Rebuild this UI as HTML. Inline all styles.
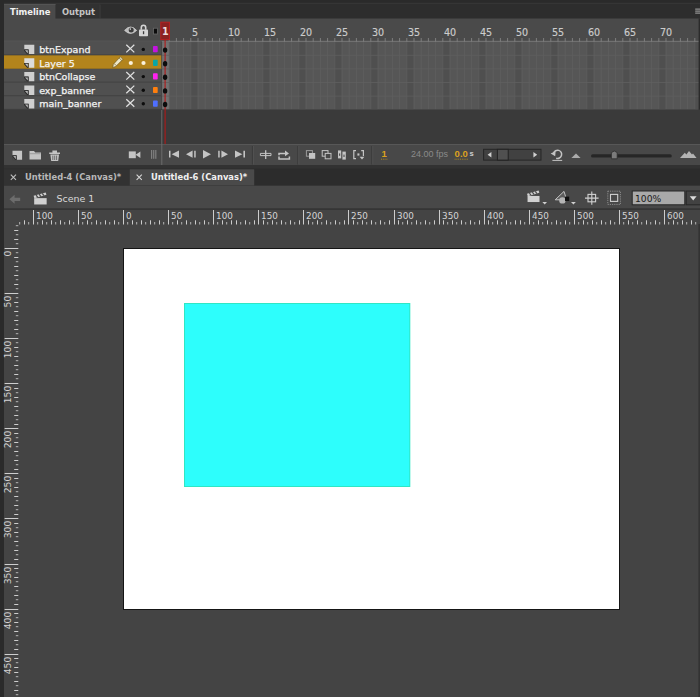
<!DOCTYPE html>
<html><head><meta charset="utf-8"><title>Animate</title>
<style>
html,body{margin:0;padding:0;background:#2a2a2a;}
body{width:700px;height:697px;position:relative;overflow:hidden;font-family:"DejaVu Sans","Liberation Sans",sans-serif;font-size:9.5px;color:#d6d6d6;}
.a{position:absolute;}
.t{position:absolute;white-space:nowrap;line-height:12px;height:12px;}
.b{font-family:"DejaVu Sans Condensed","DejaVu Sans","Liberation Sans",sans-serif;font-weight:bold;font-size:9.3px;}
svg{position:absolute;left:0;top:0;}
svg text{font-family:"DejaVu Sans","Liberation Sans",sans-serif;}
</style></head><body>

<svg width="700" height="697" viewBox="0 0 700 697">
<rect x="4" y="4" width="696" height="15" fill="#2d2d2d" />
<rect x="4" y="2.8" width="696" height="1" fill="#383838" />
<rect x="4" y="4" width="51.5" height="15" fill="#4a4a4a" />
<rect x="56" y="4" width="44" height="14.5" fill="#313131" />
<rect x="99.6" y="4.5" width="0.9" height="14" fill="#3e3e3e" />
<rect x="4" y="4" width="51.5" height="0.9" fill="#565656" />
<rect x="4" y="18.5" width="696" height="23" fill="#4a4a4a" />
<rect x="4" y="41.7" width="157.4" height="13.6" fill="#505050" />
<rect x="4" y="54.4" width="157.4" height="0.9" fill="#434343" />
<rect x="4" y="55.3" width="157.4" height="13.6" fill="#b3841c" />
<rect x="4" y="68.0" width="157.4" height="0.9" fill="#9a7420" />
<rect x="4" y="68.9" width="157.4" height="13.6" fill="#505050" />
<rect x="4" y="81.6" width="157.4" height="0.9" fill="#434343" />
<rect x="4" y="82.5" width="157.4" height="13.6" fill="#505050" />
<rect x="4" y="95.2" width="157.4" height="0.9" fill="#434343" />
<rect x="4" y="96.1" width="157.4" height="13.6" fill="#505050" />
<rect x="4" y="108.8" width="157.4" height="0.9" fill="#434343" />
<line x1="4" y1="41.2" x2="162" y2="41.2" stroke="#5e5e5e" stroke-width="0.9"/>
<rect x="162.0" y="41.5" width="536.6" height="68" fill="#565656" />
<rect x="190.8" y="41.5" width="7.2" height="68" fill="#4f4f4f" />
<rect x="226.8" y="41.5" width="7.2" height="68" fill="#4f4f4f" />
<rect x="262.8" y="41.5" width="7.2" height="68" fill="#4f4f4f" />
<rect x="298.8" y="41.5" width="7.2" height="68" fill="#4f4f4f" />
<rect x="334.8" y="41.5" width="7.2" height="68" fill="#4f4f4f" />
<rect x="370.8" y="41.5" width="7.2" height="68" fill="#4f4f4f" />
<rect x="406.8" y="41.5" width="7.2" height="68" fill="#4f4f4f" />
<rect x="442.8" y="41.5" width="7.2" height="68" fill="#4f4f4f" />
<rect x="478.8" y="41.5" width="7.2" height="68" fill="#4f4f4f" />
<rect x="514.8" y="41.5" width="7.2" height="68" fill="#4f4f4f" />
<rect x="550.8" y="41.5" width="7.2" height="68" fill="#4f4f4f" />
<rect x="586.8" y="41.5" width="7.2" height="68" fill="#4f4f4f" />
<rect x="622.8" y="41.5" width="7.2" height="68" fill="#4f4f4f" />
<rect x="658.8" y="41.5" width="7.2" height="68" fill="#4f4f4f" />
<rect x="694.8" y="41.5" width="7.2" height="68" fill="#4f4f4f" />
<rect x="162.0" y="41.5" width="7.2" height="68" fill="#727272" />
<line x1="162.0" y1="41.5" x2="162.0" y2="109.5" stroke="#626262" stroke-width="0.7"/>
<line x1="169.2" y1="41.5" x2="169.2" y2="109.5" stroke="#626262" stroke-width="0.7"/>
<line x1="176.4" y1="41.5" x2="176.4" y2="109.5" stroke="#626262" stroke-width="0.7"/>
<line x1="183.6" y1="41.5" x2="183.6" y2="109.5" stroke="#626262" stroke-width="0.7"/>
<line x1="190.8" y1="41.5" x2="190.8" y2="109.5" stroke="#626262" stroke-width="0.7"/>
<line x1="198.0" y1="41.5" x2="198.0" y2="109.5" stroke="#626262" stroke-width="0.7"/>
<line x1="205.2" y1="41.5" x2="205.2" y2="109.5" stroke="#626262" stroke-width="0.7"/>
<line x1="212.4" y1="41.5" x2="212.4" y2="109.5" stroke="#626262" stroke-width="0.7"/>
<line x1="219.6" y1="41.5" x2="219.6" y2="109.5" stroke="#626262" stroke-width="0.7"/>
<line x1="226.8" y1="41.5" x2="226.8" y2="109.5" stroke="#626262" stroke-width="0.7"/>
<line x1="234.0" y1="41.5" x2="234.0" y2="109.5" stroke="#626262" stroke-width="0.7"/>
<line x1="241.2" y1="41.5" x2="241.2" y2="109.5" stroke="#626262" stroke-width="0.7"/>
<line x1="248.4" y1="41.5" x2="248.4" y2="109.5" stroke="#626262" stroke-width="0.7"/>
<line x1="255.6" y1="41.5" x2="255.6" y2="109.5" stroke="#626262" stroke-width="0.7"/>
<line x1="262.8" y1="41.5" x2="262.8" y2="109.5" stroke="#626262" stroke-width="0.7"/>
<line x1="270.0" y1="41.5" x2="270.0" y2="109.5" stroke="#626262" stroke-width="0.7"/>
<line x1="277.2" y1="41.5" x2="277.2" y2="109.5" stroke="#626262" stroke-width="0.7"/>
<line x1="284.4" y1="41.5" x2="284.4" y2="109.5" stroke="#626262" stroke-width="0.7"/>
<line x1="291.6" y1="41.5" x2="291.6" y2="109.5" stroke="#626262" stroke-width="0.7"/>
<line x1="298.8" y1="41.5" x2="298.8" y2="109.5" stroke="#626262" stroke-width="0.7"/>
<line x1="306.0" y1="41.5" x2="306.0" y2="109.5" stroke="#626262" stroke-width="0.7"/>
<line x1="313.2" y1="41.5" x2="313.2" y2="109.5" stroke="#626262" stroke-width="0.7"/>
<line x1="320.4" y1="41.5" x2="320.4" y2="109.5" stroke="#626262" stroke-width="0.7"/>
<line x1="327.6" y1="41.5" x2="327.6" y2="109.5" stroke="#626262" stroke-width="0.7"/>
<line x1="334.8" y1="41.5" x2="334.8" y2="109.5" stroke="#626262" stroke-width="0.7"/>
<line x1="342.0" y1="41.5" x2="342.0" y2="109.5" stroke="#626262" stroke-width="0.7"/>
<line x1="349.2" y1="41.5" x2="349.2" y2="109.5" stroke="#626262" stroke-width="0.7"/>
<line x1="356.4" y1="41.5" x2="356.4" y2="109.5" stroke="#626262" stroke-width="0.7"/>
<line x1="363.6" y1="41.5" x2="363.6" y2="109.5" stroke="#626262" stroke-width="0.7"/>
<line x1="370.8" y1="41.5" x2="370.8" y2="109.5" stroke="#626262" stroke-width="0.7"/>
<line x1="378.0" y1="41.5" x2="378.0" y2="109.5" stroke="#626262" stroke-width="0.7"/>
<line x1="385.2" y1="41.5" x2="385.2" y2="109.5" stroke="#626262" stroke-width="0.7"/>
<line x1="392.4" y1="41.5" x2="392.4" y2="109.5" stroke="#626262" stroke-width="0.7"/>
<line x1="399.6" y1="41.5" x2="399.6" y2="109.5" stroke="#626262" stroke-width="0.7"/>
<line x1="406.8" y1="41.5" x2="406.8" y2="109.5" stroke="#626262" stroke-width="0.7"/>
<line x1="414.0" y1="41.5" x2="414.0" y2="109.5" stroke="#626262" stroke-width="0.7"/>
<line x1="421.2" y1="41.5" x2="421.2" y2="109.5" stroke="#626262" stroke-width="0.7"/>
<line x1="428.4" y1="41.5" x2="428.4" y2="109.5" stroke="#626262" stroke-width="0.7"/>
<line x1="435.6" y1="41.5" x2="435.6" y2="109.5" stroke="#626262" stroke-width="0.7"/>
<line x1="442.8" y1="41.5" x2="442.8" y2="109.5" stroke="#626262" stroke-width="0.7"/>
<line x1="450.0" y1="41.5" x2="450.0" y2="109.5" stroke="#626262" stroke-width="0.7"/>
<line x1="457.2" y1="41.5" x2="457.2" y2="109.5" stroke="#626262" stroke-width="0.7"/>
<line x1="464.4" y1="41.5" x2="464.4" y2="109.5" stroke="#626262" stroke-width="0.7"/>
<line x1="471.6" y1="41.5" x2="471.6" y2="109.5" stroke="#626262" stroke-width="0.7"/>
<line x1="478.8" y1="41.5" x2="478.8" y2="109.5" stroke="#626262" stroke-width="0.7"/>
<line x1="486.0" y1="41.5" x2="486.0" y2="109.5" stroke="#626262" stroke-width="0.7"/>
<line x1="493.2" y1="41.5" x2="493.2" y2="109.5" stroke="#626262" stroke-width="0.7"/>
<line x1="500.4" y1="41.5" x2="500.4" y2="109.5" stroke="#626262" stroke-width="0.7"/>
<line x1="507.6" y1="41.5" x2="507.6" y2="109.5" stroke="#626262" stroke-width="0.7"/>
<line x1="514.8" y1="41.5" x2="514.8" y2="109.5" stroke="#626262" stroke-width="0.7"/>
<line x1="522.0" y1="41.5" x2="522.0" y2="109.5" stroke="#626262" stroke-width="0.7"/>
<line x1="529.2" y1="41.5" x2="529.2" y2="109.5" stroke="#626262" stroke-width="0.7"/>
<line x1="536.4" y1="41.5" x2="536.4" y2="109.5" stroke="#626262" stroke-width="0.7"/>
<line x1="543.6" y1="41.5" x2="543.6" y2="109.5" stroke="#626262" stroke-width="0.7"/>
<line x1="550.8" y1="41.5" x2="550.8" y2="109.5" stroke="#626262" stroke-width="0.7"/>
<line x1="558.0" y1="41.5" x2="558.0" y2="109.5" stroke="#626262" stroke-width="0.7"/>
<line x1="565.2" y1="41.5" x2="565.2" y2="109.5" stroke="#626262" stroke-width="0.7"/>
<line x1="572.4" y1="41.5" x2="572.4" y2="109.5" stroke="#626262" stroke-width="0.7"/>
<line x1="579.6" y1="41.5" x2="579.6" y2="109.5" stroke="#626262" stroke-width="0.7"/>
<line x1="586.8" y1="41.5" x2="586.8" y2="109.5" stroke="#626262" stroke-width="0.7"/>
<line x1="594.0" y1="41.5" x2="594.0" y2="109.5" stroke="#626262" stroke-width="0.7"/>
<line x1="601.2" y1="41.5" x2="601.2" y2="109.5" stroke="#626262" stroke-width="0.7"/>
<line x1="608.4" y1="41.5" x2="608.4" y2="109.5" stroke="#626262" stroke-width="0.7"/>
<line x1="615.6" y1="41.5" x2="615.6" y2="109.5" stroke="#626262" stroke-width="0.7"/>
<line x1="622.8" y1="41.5" x2="622.8" y2="109.5" stroke="#626262" stroke-width="0.7"/>
<line x1="630.0" y1="41.5" x2="630.0" y2="109.5" stroke="#626262" stroke-width="0.7"/>
<line x1="637.2" y1="41.5" x2="637.2" y2="109.5" stroke="#626262" stroke-width="0.7"/>
<line x1="644.4" y1="41.5" x2="644.4" y2="109.5" stroke="#626262" stroke-width="0.7"/>
<line x1="651.6" y1="41.5" x2="651.6" y2="109.5" stroke="#626262" stroke-width="0.7"/>
<line x1="658.8" y1="41.5" x2="658.8" y2="109.5" stroke="#626262" stroke-width="0.7"/>
<line x1="666.0" y1="41.5" x2="666.0" y2="109.5" stroke="#626262" stroke-width="0.7"/>
<line x1="673.2" y1="41.5" x2="673.2" y2="109.5" stroke="#626262" stroke-width="0.7"/>
<line x1="680.4" y1="41.5" x2="680.4" y2="109.5" stroke="#626262" stroke-width="0.7"/>
<line x1="687.6" y1="41.5" x2="687.6" y2="109.5" stroke="#626262" stroke-width="0.7"/>
<line x1="694.8" y1="41.5" x2="694.8" y2="109.5" stroke="#626262" stroke-width="0.7"/>
<line x1="702.0" y1="41.5" x2="702.0" y2="109.5" stroke="#626262" stroke-width="0.7"/>
<line x1="162.0" y1="41.7" x2="700" y2="41.7" stroke="#606060" stroke-width="0.8"/>
<line x1="162.0" y1="55.3" x2="700" y2="55.3" stroke="#606060" stroke-width="0.8"/>
<line x1="162.0" y1="68.9" x2="700" y2="68.9" stroke="#606060" stroke-width="0.8"/>
<line x1="162.0" y1="82.5" x2="700" y2="82.5" stroke="#606060" stroke-width="0.8"/>
<line x1="162.0" y1="96.1" x2="700" y2="96.1" stroke="#606060" stroke-width="0.8"/>
<line x1="162.0" y1="109.7" x2="700" y2="109.7" stroke="#606060" stroke-width="0.8"/>
<line x1="162.0" y1="41.3" x2="700" y2="41.3" stroke="#808080" stroke-width="0.8"/>
<line x1="169.2" y1="38" x2="169.2" y2="41.5" stroke="#8a8a8a" stroke-width="0.8"/>
<line x1="176.4" y1="38" x2="176.4" y2="41.5" stroke="#8a8a8a" stroke-width="0.8"/>
<line x1="183.6" y1="38" x2="183.6" y2="41.5" stroke="#8a8a8a" stroke-width="0.8"/>
<line x1="190.8" y1="38" x2="190.8" y2="41.5" stroke="#8a8a8a" stroke-width="0.8"/>
<line x1="198.0" y1="38" x2="198.0" y2="41.5" stroke="#8a8a8a" stroke-width="0.8"/>
<line x1="205.2" y1="38" x2="205.2" y2="41.5" stroke="#8a8a8a" stroke-width="0.8"/>
<line x1="212.4" y1="38" x2="212.4" y2="41.5" stroke="#8a8a8a" stroke-width="0.8"/>
<line x1="219.6" y1="38" x2="219.6" y2="41.5" stroke="#8a8a8a" stroke-width="0.8"/>
<line x1="226.8" y1="38" x2="226.8" y2="41.5" stroke="#8a8a8a" stroke-width="0.8"/>
<line x1="234.0" y1="38" x2="234.0" y2="41.5" stroke="#8a8a8a" stroke-width="0.8"/>
<line x1="241.2" y1="38" x2="241.2" y2="41.5" stroke="#8a8a8a" stroke-width="0.8"/>
<line x1="248.4" y1="38" x2="248.4" y2="41.5" stroke="#8a8a8a" stroke-width="0.8"/>
<line x1="255.6" y1="38" x2="255.6" y2="41.5" stroke="#8a8a8a" stroke-width="0.8"/>
<line x1="262.8" y1="38" x2="262.8" y2="41.5" stroke="#8a8a8a" stroke-width="0.8"/>
<line x1="270.0" y1="38" x2="270.0" y2="41.5" stroke="#8a8a8a" stroke-width="0.8"/>
<line x1="277.2" y1="38" x2="277.2" y2="41.5" stroke="#8a8a8a" stroke-width="0.8"/>
<line x1="284.4" y1="38" x2="284.4" y2="41.5" stroke="#8a8a8a" stroke-width="0.8"/>
<line x1="291.6" y1="38" x2="291.6" y2="41.5" stroke="#8a8a8a" stroke-width="0.8"/>
<line x1="298.8" y1="38" x2="298.8" y2="41.5" stroke="#8a8a8a" stroke-width="0.8"/>
<line x1="306.0" y1="38" x2="306.0" y2="41.5" stroke="#8a8a8a" stroke-width="0.8"/>
<line x1="313.2" y1="38" x2="313.2" y2="41.5" stroke="#8a8a8a" stroke-width="0.8"/>
<line x1="320.4" y1="38" x2="320.4" y2="41.5" stroke="#8a8a8a" stroke-width="0.8"/>
<line x1="327.6" y1="38" x2="327.6" y2="41.5" stroke="#8a8a8a" stroke-width="0.8"/>
<line x1="334.8" y1="38" x2="334.8" y2="41.5" stroke="#8a8a8a" stroke-width="0.8"/>
<line x1="342.0" y1="38" x2="342.0" y2="41.5" stroke="#8a8a8a" stroke-width="0.8"/>
<line x1="349.2" y1="38" x2="349.2" y2="41.5" stroke="#8a8a8a" stroke-width="0.8"/>
<line x1="356.4" y1="38" x2="356.4" y2="41.5" stroke="#8a8a8a" stroke-width="0.8"/>
<line x1="363.6" y1="38" x2="363.6" y2="41.5" stroke="#8a8a8a" stroke-width="0.8"/>
<line x1="370.8" y1="38" x2="370.8" y2="41.5" stroke="#8a8a8a" stroke-width="0.8"/>
<line x1="378.0" y1="38" x2="378.0" y2="41.5" stroke="#8a8a8a" stroke-width="0.8"/>
<line x1="385.2" y1="38" x2="385.2" y2="41.5" stroke="#8a8a8a" stroke-width="0.8"/>
<line x1="392.4" y1="38" x2="392.4" y2="41.5" stroke="#8a8a8a" stroke-width="0.8"/>
<line x1="399.6" y1="38" x2="399.6" y2="41.5" stroke="#8a8a8a" stroke-width="0.8"/>
<line x1="406.8" y1="38" x2="406.8" y2="41.5" stroke="#8a8a8a" stroke-width="0.8"/>
<line x1="414.0" y1="38" x2="414.0" y2="41.5" stroke="#8a8a8a" stroke-width="0.8"/>
<line x1="421.2" y1="38" x2="421.2" y2="41.5" stroke="#8a8a8a" stroke-width="0.8"/>
<line x1="428.4" y1="38" x2="428.4" y2="41.5" stroke="#8a8a8a" stroke-width="0.8"/>
<line x1="435.6" y1="38" x2="435.6" y2="41.5" stroke="#8a8a8a" stroke-width="0.8"/>
<line x1="442.8" y1="38" x2="442.8" y2="41.5" stroke="#8a8a8a" stroke-width="0.8"/>
<line x1="450.0" y1="38" x2="450.0" y2="41.5" stroke="#8a8a8a" stroke-width="0.8"/>
<line x1="457.2" y1="38" x2="457.2" y2="41.5" stroke="#8a8a8a" stroke-width="0.8"/>
<line x1="464.4" y1="38" x2="464.4" y2="41.5" stroke="#8a8a8a" stroke-width="0.8"/>
<line x1="471.6" y1="38" x2="471.6" y2="41.5" stroke="#8a8a8a" stroke-width="0.8"/>
<line x1="478.8" y1="38" x2="478.8" y2="41.5" stroke="#8a8a8a" stroke-width="0.8"/>
<line x1="486.0" y1="38" x2="486.0" y2="41.5" stroke="#8a8a8a" stroke-width="0.8"/>
<line x1="493.2" y1="38" x2="493.2" y2="41.5" stroke="#8a8a8a" stroke-width="0.8"/>
<line x1="500.4" y1="38" x2="500.4" y2="41.5" stroke="#8a8a8a" stroke-width="0.8"/>
<line x1="507.6" y1="38" x2="507.6" y2="41.5" stroke="#8a8a8a" stroke-width="0.8"/>
<line x1="514.8" y1="38" x2="514.8" y2="41.5" stroke="#8a8a8a" stroke-width="0.8"/>
<line x1="522.0" y1="38" x2="522.0" y2="41.5" stroke="#8a8a8a" stroke-width="0.8"/>
<line x1="529.2" y1="38" x2="529.2" y2="41.5" stroke="#8a8a8a" stroke-width="0.8"/>
<line x1="536.4" y1="38" x2="536.4" y2="41.5" stroke="#8a8a8a" stroke-width="0.8"/>
<line x1="543.6" y1="38" x2="543.6" y2="41.5" stroke="#8a8a8a" stroke-width="0.8"/>
<line x1="550.8" y1="38" x2="550.8" y2="41.5" stroke="#8a8a8a" stroke-width="0.8"/>
<line x1="558.0" y1="38" x2="558.0" y2="41.5" stroke="#8a8a8a" stroke-width="0.8"/>
<line x1="565.2" y1="38" x2="565.2" y2="41.5" stroke="#8a8a8a" stroke-width="0.8"/>
<line x1="572.4" y1="38" x2="572.4" y2="41.5" stroke="#8a8a8a" stroke-width="0.8"/>
<line x1="579.6" y1="38" x2="579.6" y2="41.5" stroke="#8a8a8a" stroke-width="0.8"/>
<line x1="586.8" y1="38" x2="586.8" y2="41.5" stroke="#8a8a8a" stroke-width="0.8"/>
<line x1="594.0" y1="38" x2="594.0" y2="41.5" stroke="#8a8a8a" stroke-width="0.8"/>
<line x1="601.2" y1="38" x2="601.2" y2="41.5" stroke="#8a8a8a" stroke-width="0.8"/>
<line x1="608.4" y1="38" x2="608.4" y2="41.5" stroke="#8a8a8a" stroke-width="0.8"/>
<line x1="615.6" y1="38" x2="615.6" y2="41.5" stroke="#8a8a8a" stroke-width="0.8"/>
<line x1="622.8" y1="38" x2="622.8" y2="41.5" stroke="#8a8a8a" stroke-width="0.8"/>
<line x1="630.0" y1="38" x2="630.0" y2="41.5" stroke="#8a8a8a" stroke-width="0.8"/>
<line x1="637.2" y1="38" x2="637.2" y2="41.5" stroke="#8a8a8a" stroke-width="0.8"/>
<line x1="644.4" y1="38" x2="644.4" y2="41.5" stroke="#8a8a8a" stroke-width="0.8"/>
<line x1="651.6" y1="38" x2="651.6" y2="41.5" stroke="#8a8a8a" stroke-width="0.8"/>
<line x1="658.8" y1="38" x2="658.8" y2="41.5" stroke="#8a8a8a" stroke-width="0.8"/>
<line x1="666.0" y1="38" x2="666.0" y2="41.5" stroke="#8a8a8a" stroke-width="0.8"/>
<line x1="673.2" y1="38" x2="673.2" y2="41.5" stroke="#8a8a8a" stroke-width="0.8"/>
<line x1="680.4" y1="38" x2="680.4" y2="41.5" stroke="#8a8a8a" stroke-width="0.8"/>
<line x1="687.6" y1="38" x2="687.6" y2="41.5" stroke="#8a8a8a" stroke-width="0.8"/>
<line x1="694.8" y1="38" x2="694.8" y2="41.5" stroke="#8a8a8a" stroke-width="0.8"/>
<line x1="702.0" y1="38" x2="702.0" y2="41.5" stroke="#8a8a8a" stroke-width="0.8"/>
<text x="192.0" y="35.5" font-size="9.6" fill="#cccccc" stroke="#cccccc" stroke-width="0.15">5</text>
<text x="228.0" y="35.5" font-size="9.6" fill="#cccccc" stroke="#cccccc" stroke-width="0.15">10</text>
<text x="264.0" y="35.5" font-size="9.6" fill="#cccccc" stroke="#cccccc" stroke-width="0.15">15</text>
<text x="300.0" y="35.5" font-size="9.6" fill="#cccccc" stroke="#cccccc" stroke-width="0.15">20</text>
<text x="336.0" y="35.5" font-size="9.6" fill="#cccccc" stroke="#cccccc" stroke-width="0.15">25</text>
<text x="372.0" y="35.5" font-size="9.6" fill="#cccccc" stroke="#cccccc" stroke-width="0.15">30</text>
<text x="408.0" y="35.5" font-size="9.6" fill="#cccccc" stroke="#cccccc" stroke-width="0.15">35</text>
<text x="444.0" y="35.5" font-size="9.6" fill="#cccccc" stroke="#cccccc" stroke-width="0.15">40</text>
<text x="480.0" y="35.5" font-size="9.6" fill="#cccccc" stroke="#cccccc" stroke-width="0.15">45</text>
<text x="516.0" y="35.5" font-size="9.6" fill="#cccccc" stroke="#cccccc" stroke-width="0.15">50</text>
<text x="552.0" y="35.5" font-size="9.6" fill="#cccccc" stroke="#cccccc" stroke-width="0.15">55</text>
<text x="588.0" y="35.5" font-size="9.6" fill="#cccccc" stroke="#cccccc" stroke-width="0.15">60</text>
<text x="624.0" y="35.5" font-size="9.6" fill="#cccccc" stroke="#cccccc" stroke-width="0.15">65</text>
<text x="660.0" y="35.5" font-size="9.6" fill="#cccccc" stroke="#cccccc" stroke-width="0.15">70</text>
<rect x="698.6" y="18.5" width="1.4" height="146.5" fill="#2b2b2b" />
<rect x="4" y="109.5" width="696" height="35" fill="#3a3a3a" />
<rect x="4" y="144" width="696" height="1" fill="#575757" />
<rect x="4" y="145" width="696" height="20" fill="#484848" />
<rect x="4" y="165" width="696" height="4" fill="#323232" />
<rect x="4" y="168.6" width="696" height="17" fill="#2c2c2c" />
<rect x="4" y="169.3" width="125" height="16" fill="#323232" />
<rect x="129.6" y="169.3" width="124.6" height="16.2" fill="#4a4a4a" />
<rect x="4" y="185.6" width="696" height="24" fill="#484848" />
<rect x="4" y="208.4" width="696" height="1.1" fill="#303030" />
<rect x="4" y="210" width="696" height="487" fill="#444444" />
<rect x="698.4" y="224" width="1.6" height="473" fill="#333333" />
<rect x="123" y="248" width="497" height="362" fill="#151515" />
<rect x="124" y="249" width="495" height="360" fill="#ffffff" />
<rect x="184" y="303" width="226.3" height="184" fill="#30e6c4" />
<rect x="185" y="304" width="224.3" height="182" fill="#2dfefc" />
<rect x="160.8" y="22.2" width="8.6" height="17.4" fill="#8a2222" stroke="#b81e1e" stroke-width="1"/>
<line x1="165.1" y1="39.5" x2="165.1" y2="144" stroke="#b01a1a" stroke-width="1.1"/>
<text x="165.4" y="35" font-size="9.6" fill="#ecdcdc" text-anchor="middle" font-weight="bold">1</text>
<ellipse cx="165.1" cy="50.1" rx="2.2" ry="2.7" fill="#0c0c0c"/>
<ellipse cx="165.1" cy="63.7" rx="2.2" ry="2.7" fill="#0c0c0c"/>
<ellipse cx="165.1" cy="77.3" rx="2.2" ry="2.7" fill="#0c0c0c"/>
<ellipse cx="165.1" cy="90.9" rx="2.2" ry="2.7" fill="#0c0c0c"/>
<ellipse cx="165.1" cy="104.5" rx="2.2" ry="2.7" fill="#0c0c0c"/>
<path d="M124.6 30.4 Q130.6 23.6 136.6 30.4 Q130.6 36.4 124.6 30.4Z" fill="#bdbdbd" stroke="#d2d2d2" stroke-width="0.8"/><circle cx="131.2" cy="30" r="2.5" fill="#3c3c3c"/><circle cx="130.3" cy="29.1" r="0.8" fill="#d8d8d8"/>
<rect x="139" y="29.4" width="9" height="6.8" rx="0.8" fill="#d4d4d4"/><path d="M141.3 29.8 V27.6 A2.2 2.4 0 0 1 145.7 27.6 V29.8" fill="none" stroke="#d4d4d4" stroke-width="1.6"/><rect x="142.9" y="31.2" width="1.3" height="3" fill="#3c3c3c"/>
<rect x="153.4" y="28.2" width="4.2" height="5.8" fill="#0c0c0c" stroke="#6a6a6a" stroke-width="0.8"/>
<rect x="695.2" y="8.6" width="4.8" height="1" fill="#a8a8a8"/>
<rect x="695.2" y="10.6" width="4.8" height="1" fill="#a8a8a8"/>
<rect x="695.2" y="12.6" width="4.8" height="1" fill="#a8a8a8"/>
<g transform="translate(24.3,44.7) scale(1.0)"><path d="M0 0 H10 V9.4 H4.3 V4.7 H0Z" fill="#cfcfcf"/><rect x="-0.2" y="4.7" width="4.5" height="4.9" fill="#2a2a2a"/><path d="M0.7 5.5 H3.5 V8.7Z" fill="#cfcfcf" opacity="0.85"/><path d="M-0.3 6 L3 9.7 H-0.3Z" fill="#505050"/></g>
<path d="M126.3 44.8 L134.3 52.4 M134.3 44.8 L126.3 52.4" stroke="#e0e0e0" stroke-width="1.25" fill="none"/>
<circle cx="143.3" cy="49.4" r="1.7" fill="#0c0c0c"/>
<rect x="153" y="46.1" width="4.7" height="6.2" fill="#c414e0" rx="0.8"/>
<g transform="translate(24.3,58.3) scale(1.0)"><path d="M0 0 H10 V9.4 H4.3 V4.7 H0Z" fill="#dcdcdc"/><rect x="-0.2" y="4.7" width="4.5" height="4.9" fill="#2a2a2a"/><path d="M0.7 5.5 H3.5 V8.7Z" fill="#dcdcdc" opacity="0.85"/><path d="M-0.3 6 L3 9.7 H-0.3Z" fill="#b3841c"/></g>
<circle cx="130.8" cy="63.0" r="2.1" fill="#fbf2dc"/><circle cx="143.5" cy="63.0" r="2.1" fill="#fbf2dc"/>
<g transform="translate(112,56.1) scale(1.16)"><path d="M7.2 0.6 L9.4 2.8 L3.2 9 L0.6 9.8 L1.2 7Z" fill="#efe7c6" stroke="#5c4a1a" stroke-width="0.5"/><path d="M2 6.6 L3.6 8.2" stroke="#6a5520" stroke-width="0.6"/><path d="M6.2 1.6 L8.4 3.8" stroke="#6a5520" stroke-width="0.6"/></g>
<rect x="153" y="59.7" width="4.7" height="6.2" fill="#0aa6a6" rx="0.8"/>
<g transform="translate(24.3,71.9) scale(1.0)"><path d="M0 0 H10 V9.4 H4.3 V4.7 H0Z" fill="#cfcfcf"/><rect x="-0.2" y="4.7" width="4.5" height="4.9" fill="#2a2a2a"/><path d="M0.7 5.5 H3.5 V8.7Z" fill="#cfcfcf" opacity="0.85"/><path d="M-0.3 6 L3 9.7 H-0.3Z" fill="#505050"/></g>
<path d="M126.3 72.0 L134.3 79.60000000000001 M134.3 72.0 L126.3 79.60000000000001" stroke="#e0e0e0" stroke-width="1.25" fill="none"/>
<circle cx="143.3" cy="76.60000000000001" r="1.7" fill="#0c0c0c"/>
<rect x="153" y="73.3" width="4.7" height="6.2" fill="#ff22f0" rx="0.8"/>
<g transform="translate(24.3,85.5) scale(1.0)"><path d="M0 0 H10 V9.4 H4.3 V4.7 H0Z" fill="#cfcfcf"/><rect x="-0.2" y="4.7" width="4.5" height="4.9" fill="#2a2a2a"/><path d="M0.7 5.5 H3.5 V8.7Z" fill="#cfcfcf" opacity="0.85"/><path d="M-0.3 6 L3 9.7 H-0.3Z" fill="#505050"/></g>
<path d="M126.3 85.6 L134.3 93.2 M134.3 85.6 L126.3 93.2" stroke="#e0e0e0" stroke-width="1.25" fill="none"/>
<circle cx="143.3" cy="90.2" r="1.7" fill="#0c0c0c"/>
<rect x="153" y="86.9" width="4.7" height="6.2" fill="#ff7f0e" rx="0.8"/>
<g transform="translate(24.3,99.1) scale(1.0)"><path d="M0 0 H10 V9.4 H4.3 V4.7 H0Z" fill="#cfcfcf"/><rect x="-0.2" y="4.7" width="4.5" height="4.9" fill="#2a2a2a"/><path d="M0.7 5.5 H3.5 V8.7Z" fill="#cfcfcf" opacity="0.85"/><path d="M-0.3 6 L3 9.7 H-0.3Z" fill="#505050"/></g>
<path d="M126.3 99.2 L134.3 106.80000000000001 M134.3 99.2 L126.3 106.80000000000001" stroke="#e0e0e0" stroke-width="1.25" fill="none"/>
<circle cx="143.3" cy="103.80000000000001" r="1.7" fill="#0c0c0c"/>
<rect x="153" y="100.5" width="4.7" height="6.2" fill="#4f6fff" rx="0.8"/>
<line x1="161.8" y1="110" x2="161.8" y2="165" stroke="#6c6c6c" stroke-width="1"/>
<g transform="translate(12.5,150.8) scale(0.96)"><path d="M0 0 H10 V9.4 H4.3 V4.7 H0Z" fill="#c4c4c4"/><rect x="-0.2" y="4.7" width="4.5" height="4.9" fill="#2a2a2a"/><path d="M0.7 5.5 H3.5 V8.7Z" fill="#c4c4c4" opacity="0.85"/><path d="M-0.3 6 L3 9.7 H-0.3Z" fill="#484848"/></g>
<path d="M29.5 151 H34 L35.2 152.6 H41 V159.6 H29.5Z" fill="#c4c4c4"/><path d="M30 153.7 H40.5" stroke="#8c8c8c" stroke-width="0.7"/>
<path d="M49.2 152.6 H60 V154 H49.2Z M52.4 150.6 H57 V152.8 H52.4Z" fill="#c4c4c4"/><path d="M50.4 154.6 H59 L58.2 161 H51.2Z" fill="#c4c4c4"/><path d="M52.8 155.6 V160 M54.7 155.6 V160 M56.6 155.6 V160" stroke="#555" stroke-width="0.8"/>
<rect x="128.8" y="151.4" width="7" height="6.8" fill="#c4c4c4"/><path d="M135.6 154.8 L140.4 151.6 V158 Z" fill="#c4c4c4"/>
<rect x="151.0" y="150" width="1.2" height="8.8" fill="#808080"/>
<rect x="153.1" y="150" width="1.2" height="8.8" fill="#808080"/>
<rect x="155.2" y="150" width="1.2" height="8.8" fill="#808080"/>
<path d="M169 150.79999999999998 h1.5 v6.8 h-1.5Z M179 150.6 L171.6 154.2 L179 157.79999999999998Z" fill="#c4c4c4"/>
<path d="M192.6 150.6 L186 154.2 L192.6 157.79999999999998Z M194.2 150.79999999999998 h1.5 v6.8 h-1.5Z" fill="#c4c4c4"/>
<path d="M203 150.0 L211 154.2 L203 158.39999999999998Z" fill="#c4c4c4"/>
<path d="M218.2 150.79999999999998 h1.5 v6.8 h-1.5Z M221.4 150.6 L228 154.2 L221.4 157.79999999999998Z" fill="#c4c4c4"/>
<path d="M235 150.6 L242.4 154.2 L235 157.79999999999998Z M243.4 150.79999999999998 h1.6 v6.8 h-1.6Z" fill="#c4c4c4"/>
<line x1="252.4" y1="146" x2="252.4" y2="164.5" stroke="#3a3a3a" stroke-width="1"/><line x1="253.4" y1="146" x2="253.4" y2="164.5" stroke="#555" stroke-width="0.8"/>
<line x1="297.8" y1="146" x2="297.8" y2="164.5" stroke="#3a3a3a" stroke-width="1"/><line x1="298.8" y1="146" x2="298.8" y2="164.5" stroke="#555" stroke-width="0.8"/>
<line x1="371.8" y1="146" x2="371.8" y2="164.5" stroke="#3a3a3a" stroke-width="1"/><line x1="372.8" y1="146" x2="372.8" y2="164.5" stroke="#555" stroke-width="0.8"/>
<path d="M260.4 153.4 H271 V155.6 H260.4Z" fill="none" stroke="#c4c4c4" stroke-width="1"/><path d="M265.7 150.2 V159" stroke="#c4c4c4" stroke-width="1.3"/>
<path d="M279 156.6 V159 H289.4 V156.6" fill="none" stroke="#c4c4c4" stroke-width="1.5"/><path d="M279 155.2 V153.4 H285.6" fill="none" stroke="#c4c4c4" stroke-width="1.5"/><path d="M285 150.6 L289 153.4 L285 156.2Z" fill="#c4c4c4"/>
<rect x="306.4" y="150.6" width="6" height="5.6" fill="none" stroke="#9a9a9a" stroke-width="1"/><rect x="309" y="153" width="6.2" height="5.8" fill="#c4c4c4"/>
<rect x="322.2" y="150.6" width="5.8" height="5.6" fill="none" stroke="#c4c4c4" stroke-width="1"/><rect x="325.2" y="153.4" width="5.8" height="5.4" fill="#484848" stroke="#c4c4c4" stroke-width="1"/>
<rect x="338" y="150.4" width="3.2" height="8" fill="#c4c4c4"/><rect x="342.4" y="151.6" width="3.4" height="8" fill="#c4c4c4"/><rect x="339" y="153.4" width="1.2" height="2.4" fill="#555"/><rect x="343.4" y="154.6" width="1.2" height="2.4" fill="#555"/>
<path d="M356 150.6 H353.8 V158.6 H356 M361.2 150.6 H363.4 V156" fill="none" stroke="#c4c4c4" stroke-width="1.2"/><rect x="357.4" y="153.4" width="2" height="2.2" fill="#c4c4c4"/><path d="M359.6 156.8 H364.4 L362 159.4Z" fill="#c4c4c4"/>
<rect x="483.6" y="149.3" width="57.4" height="10.8" fill="#414141" stroke="#262626" stroke-width="1"/>
<rect x="497.4" y="149.3" width="10.8" height="10.8" fill="#505050" stroke="#222" stroke-width="1"/>
<path d="M491.4 152 L487.6 154.7 L491.4 157.4Z M533.4 152 L537.2 154.7 L533.4 157.4Z" fill="#d0d0d0"/>
<path d="M553.6 153.2 A4.1 4.1 0 1 1 556.2 158.2" fill="none" stroke="#c4c4c4" stroke-width="1.5"/><path d="M550.6 153.6 L555.6 151.2 L555.2 156.2Z" fill="#c4c4c4"/><path d="M552.4 160.4 H562.2" stroke="#c4c4c4" stroke-width="1"/>
<path d="M571.4 158 L576 153.6 L580.6 158Z" fill="#ababab"/>
<rect x="591" y="154.2" width="80.8" height="3.4" rx="1.7" fill="#262626"/>
<path d="M611.4 152.6 L614.3 151 L617.2 152.6 V158.8 H611.4Z" fill="#7c7c7c" stroke="#2c2c2c" stroke-width="0.8"/>
<path d="M680 158 L684.8 152.8 L686.4 154.4 L689 151 L692 154.6 L693 153.4 L696.6 158Z" fill="#b4b4b4"/>
<line x1="381" y1="159.2" x2="387.5" y2="159.2" stroke="#b08a20" stroke-width="0.9" stroke-dasharray="1 0.8"/>
<line x1="454.6" y1="159.2" x2="468" y2="159.2" stroke="#b08a20" stroke-width="0.9" stroke-dasharray="1 0.8"/>
<path d="M10.8 174.6 L16.0 179.8 M16.0 174.6 L10.8 179.8" stroke="#c0c0c0" stroke-width="1.1"/>
<path d="M136.6 174.6 L141.79999999999998 179.8 M141.79999999999998 174.6 L136.6 179.8" stroke="#d8d8d8" stroke-width="1.1"/>
<path d="M9.4 199.3 L14.6 194.8 V197.7 H20.2 V200.9 H14.6 V203.8Z" fill="#6c6c6c"/>
<g transform="translate(33.6,191.8) scale(0.96)"><rect x="0.6" y="6.6" width="13" height="6.6" fill="#d0d0d0"/><path d="M0 4.2 L12.6 0.6 L13.4 3.2 L0.8 6.8Z" fill="#d0d0d0"/><path d="M2.6 3.4 L4.4 5.8 M5.8 2.5 L7.6 4.9 M9 1.6 L10.8 4" stroke="#484848" stroke-width="1.3"/></g>
<g transform="translate(527,189.9) scale(0.92)"><rect x="0.6" y="6.6" width="13" height="6.6" fill="#d0d0d0"/><path d="M0 4.2 L12.6 0.6 L13.4 3.2 L0.8 6.8Z" fill="#d0d0d0"/><path d="M2.6 3.4 L4.4 5.8 M5.8 2.5 L7.6 4.9 M9 1.6 L10.8 4" stroke="#484848" stroke-width="1.3"/></g>
<path d="M542.4 202 H547 L544.7 204.6Z" fill="#d0d0d0"/>
<path d="M555.2 199.8 L564 191.4 L566.6 199.8Z" fill="#5c5c5c" stroke="#c4c4c4" stroke-width="1"/><circle cx="562.4" cy="200.4" r="3.2" fill="#b4b4b4"/><rect x="565" y="196.6" width="4.2" height="4.4" fill="#101010"/><path d="M571 202 H575.8 L573.4 204.6Z" fill="#d0d0d0"/>
<rect x="588" y="194.4" width="7.6" height="7.4" fill="none" stroke="#d0d0d0" stroke-width="1.1"/><path d="M591.8 191.4 V204.8 M585 198.1 H598.6" stroke="#d0d0d0" stroke-width="1.1"/>
<rect x="607.8" y="191.2" width="12.6" height="13.2" fill="none" stroke="#8c8c8c" stroke-width="1" stroke-dasharray="1.2 1"/><rect x="610.5" y="194.4" width="7.2" height="7" fill="#484848" stroke="#d0d0d0" stroke-width="1.1"/>
<rect x="632.2" y="191" width="52.6" height="13.8" fill="#a9a9a9" stroke="#262626" stroke-width="1"/>
<rect x="686.2" y="191" width="15" height="13.8" fill="#424242" stroke="#262626" stroke-width="1"/><path d="M689.8 196.2 H696.6 L693.2 200.4Z" fill="#dcdcdc"/>
<line x1="19.7" y1="222" x2="19.7" y2="224.5" stroke="#b4b4b4" stroke-width="1"/>
<line x1="24.5" y1="220.3" x2="24.5" y2="224.5" stroke="#cdcdcd" stroke-width="1"/>
<line x1="28.7" y1="222" x2="28.7" y2="224.5" stroke="#b4b4b4" stroke-width="1"/>
<line x1="33.5" y1="210" x2="33.5" y2="224.5" stroke="#cdcdcd" stroke-width="1"/>
<text x="36.1" y="218.6" font-size="8.8" fill="#d4d4d4">100</text>
<line x1="37.7" y1="222" x2="37.7" y2="224.5" stroke="#b4b4b4" stroke-width="1"/>
<line x1="42.5" y1="220.3" x2="42.5" y2="224.5" stroke="#cdcdcd" stroke-width="1"/>
<line x1="46.7" y1="222" x2="46.7" y2="224.5" stroke="#b4b4b4" stroke-width="1"/>
<line x1="51.5" y1="220.3" x2="51.5" y2="224.5" stroke="#cdcdcd" stroke-width="1"/>
<line x1="55.7" y1="222" x2="55.7" y2="224.5" stroke="#b4b4b4" stroke-width="1"/>
<line x1="60.5" y1="220.3" x2="60.5" y2="224.5" stroke="#cdcdcd" stroke-width="1"/>
<line x1="64.7" y1="222" x2="64.7" y2="224.5" stroke="#b4b4b4" stroke-width="1"/>
<line x1="69.5" y1="220.3" x2="69.5" y2="224.5" stroke="#cdcdcd" stroke-width="1"/>
<line x1="73.7" y1="222" x2="73.7" y2="224.5" stroke="#b4b4b4" stroke-width="1"/>
<line x1="78.5" y1="210" x2="78.5" y2="224.5" stroke="#cdcdcd" stroke-width="1"/>
<text x="81.1" y="218.6" font-size="8.8" fill="#d4d4d4">50</text>
<line x1="82.7" y1="222" x2="82.7" y2="224.5" stroke="#b4b4b4" stroke-width="1"/>
<line x1="87.5" y1="220.3" x2="87.5" y2="224.5" stroke="#cdcdcd" stroke-width="1"/>
<line x1="91.7" y1="222" x2="91.7" y2="224.5" stroke="#b4b4b4" stroke-width="1"/>
<line x1="96.5" y1="220.3" x2="96.5" y2="224.5" stroke="#cdcdcd" stroke-width="1"/>
<line x1="100.7" y1="222" x2="100.7" y2="224.5" stroke="#b4b4b4" stroke-width="1"/>
<line x1="105.5" y1="220.3" x2="105.5" y2="224.5" stroke="#cdcdcd" stroke-width="1"/>
<line x1="109.7" y1="222" x2="109.7" y2="224.5" stroke="#b4b4b4" stroke-width="1"/>
<line x1="114.5" y1="220.3" x2="114.5" y2="224.5" stroke="#cdcdcd" stroke-width="1"/>
<line x1="118.7" y1="222" x2="118.7" y2="224.5" stroke="#b4b4b4" stroke-width="1"/>
<line x1="123.5" y1="210" x2="123.5" y2="224.5" stroke="#cdcdcd" stroke-width="1"/>
<text x="126.1" y="218.6" font-size="8.8" fill="#d4d4d4">0</text>
<line x1="127.7" y1="222" x2="127.7" y2="224.5" stroke="#b4b4b4" stroke-width="1"/>
<line x1="132.5" y1="220.3" x2="132.5" y2="224.5" stroke="#cdcdcd" stroke-width="1"/>
<line x1="136.7" y1="222" x2="136.7" y2="224.5" stroke="#b4b4b4" stroke-width="1"/>
<line x1="141.5" y1="220.3" x2="141.5" y2="224.5" stroke="#cdcdcd" stroke-width="1"/>
<line x1="145.7" y1="222" x2="145.7" y2="224.5" stroke="#b4b4b4" stroke-width="1"/>
<line x1="150.5" y1="220.3" x2="150.5" y2="224.5" stroke="#cdcdcd" stroke-width="1"/>
<line x1="154.7" y1="222" x2="154.7" y2="224.5" stroke="#b4b4b4" stroke-width="1"/>
<line x1="159.5" y1="220.3" x2="159.5" y2="224.5" stroke="#cdcdcd" stroke-width="1"/>
<line x1="163.7" y1="222" x2="163.7" y2="224.5" stroke="#b4b4b4" stroke-width="1"/>
<line x1="168.5" y1="210" x2="168.5" y2="224.5" stroke="#cdcdcd" stroke-width="1"/>
<text x="171.1" y="218.6" font-size="8.8" fill="#d4d4d4">50</text>
<line x1="172.7" y1="222" x2="172.7" y2="224.5" stroke="#b4b4b4" stroke-width="1"/>
<line x1="177.5" y1="220.3" x2="177.5" y2="224.5" stroke="#cdcdcd" stroke-width="1"/>
<line x1="181.7" y1="222" x2="181.7" y2="224.5" stroke="#b4b4b4" stroke-width="1"/>
<line x1="186.5" y1="220.3" x2="186.5" y2="224.5" stroke="#cdcdcd" stroke-width="1"/>
<line x1="190.7" y1="222" x2="190.7" y2="224.5" stroke="#b4b4b4" stroke-width="1"/>
<line x1="195.5" y1="220.3" x2="195.5" y2="224.5" stroke="#cdcdcd" stroke-width="1"/>
<line x1="199.7" y1="222" x2="199.7" y2="224.5" stroke="#b4b4b4" stroke-width="1"/>
<line x1="204.5" y1="220.3" x2="204.5" y2="224.5" stroke="#cdcdcd" stroke-width="1"/>
<line x1="208.7" y1="222" x2="208.7" y2="224.5" stroke="#b4b4b4" stroke-width="1"/>
<line x1="213.5" y1="210" x2="213.5" y2="224.5" stroke="#cdcdcd" stroke-width="1"/>
<text x="216.1" y="218.6" font-size="8.8" fill="#d4d4d4">100</text>
<line x1="217.7" y1="222" x2="217.7" y2="224.5" stroke="#b4b4b4" stroke-width="1"/>
<line x1="222.5" y1="220.3" x2="222.5" y2="224.5" stroke="#cdcdcd" stroke-width="1"/>
<line x1="226.7" y1="222" x2="226.7" y2="224.5" stroke="#b4b4b4" stroke-width="1"/>
<line x1="231.5" y1="220.3" x2="231.5" y2="224.5" stroke="#cdcdcd" stroke-width="1"/>
<line x1="236.5" y1="220.3" x2="236.5" y2="224.5" stroke="#cdcdcd" stroke-width="1"/>
<line x1="240.7" y1="222" x2="240.7" y2="224.5" stroke="#b4b4b4" stroke-width="1"/>
<line x1="245.5" y1="220.3" x2="245.5" y2="224.5" stroke="#cdcdcd" stroke-width="1"/>
<line x1="249.7" y1="222" x2="249.7" y2="224.5" stroke="#b4b4b4" stroke-width="1"/>
<line x1="254.5" y1="220.3" x2="254.5" y2="224.5" stroke="#cdcdcd" stroke-width="1"/>
<line x1="258.5" y1="210" x2="258.5" y2="224.5" stroke="#cdcdcd" stroke-width="1"/>
<text x="261.1" y="218.6" font-size="8.8" fill="#d4d4d4">150</text>
<line x1="263.5" y1="220.3" x2="263.5" y2="224.5" stroke="#cdcdcd" stroke-width="1"/>
<line x1="267.7" y1="222" x2="267.7" y2="224.5" stroke="#b4b4b4" stroke-width="1"/>
<line x1="272.5" y1="220.3" x2="272.5" y2="224.5" stroke="#cdcdcd" stroke-width="1"/>
<line x1="276.7" y1="222" x2="276.7" y2="224.5" stroke="#b4b4b4" stroke-width="1"/>
<line x1="281.5" y1="220.3" x2="281.5" y2="224.5" stroke="#cdcdcd" stroke-width="1"/>
<line x1="285.7" y1="222" x2="285.7" y2="224.5" stroke="#b4b4b4" stroke-width="1"/>
<line x1="290.5" y1="220.3" x2="290.5" y2="224.5" stroke="#cdcdcd" stroke-width="1"/>
<line x1="294.7" y1="222" x2="294.7" y2="224.5" stroke="#b4b4b4" stroke-width="1"/>
<line x1="299.5" y1="220.3" x2="299.5" y2="224.5" stroke="#cdcdcd" stroke-width="1"/>
<line x1="303.5" y1="210" x2="303.5" y2="224.5" stroke="#cdcdcd" stroke-width="1"/>
<text x="306.1" y="218.6" font-size="8.8" fill="#d4d4d4">200</text>
<line x1="308.5" y1="220.3" x2="308.5" y2="224.5" stroke="#cdcdcd" stroke-width="1"/>
<line x1="312.7" y1="222" x2="312.7" y2="224.5" stroke="#b4b4b4" stroke-width="1"/>
<line x1="317.5" y1="220.3" x2="317.5" y2="224.5" stroke="#cdcdcd" stroke-width="1"/>
<line x1="321.7" y1="222" x2="321.7" y2="224.5" stroke="#b4b4b4" stroke-width="1"/>
<line x1="326.5" y1="220.3" x2="326.5" y2="224.5" stroke="#cdcdcd" stroke-width="1"/>
<line x1="330.7" y1="222" x2="330.7" y2="224.5" stroke="#b4b4b4" stroke-width="1"/>
<line x1="335.5" y1="220.3" x2="335.5" y2="224.5" stroke="#cdcdcd" stroke-width="1"/>
<line x1="339.7" y1="222" x2="339.7" y2="224.5" stroke="#b4b4b4" stroke-width="1"/>
<line x1="344.5" y1="220.3" x2="344.5" y2="224.5" stroke="#cdcdcd" stroke-width="1"/>
<line x1="348.5" y1="210" x2="348.5" y2="224.5" stroke="#cdcdcd" stroke-width="1"/>
<text x="351.1" y="218.6" font-size="8.8" fill="#d4d4d4">250</text>
<line x1="353.5" y1="220.3" x2="353.5" y2="224.5" stroke="#cdcdcd" stroke-width="1"/>
<line x1="357.7" y1="222" x2="357.7" y2="224.5" stroke="#b4b4b4" stroke-width="1"/>
<line x1="362.5" y1="220.3" x2="362.5" y2="224.5" stroke="#cdcdcd" stroke-width="1"/>
<line x1="366.7" y1="222" x2="366.7" y2="224.5" stroke="#b4b4b4" stroke-width="1"/>
<line x1="371.5" y1="220.3" x2="371.5" y2="224.5" stroke="#cdcdcd" stroke-width="1"/>
<line x1="375.7" y1="222" x2="375.7" y2="224.5" stroke="#b4b4b4" stroke-width="1"/>
<line x1="380.5" y1="220.3" x2="380.5" y2="224.5" stroke="#cdcdcd" stroke-width="1"/>
<line x1="384.7" y1="222" x2="384.7" y2="224.5" stroke="#b4b4b4" stroke-width="1"/>
<line x1="389.5" y1="220.3" x2="389.5" y2="224.5" stroke="#cdcdcd" stroke-width="1"/>
<line x1="394.5" y1="210" x2="394.5" y2="224.5" stroke="#cdcdcd" stroke-width="1"/>
<text x="397.1" y="218.6" font-size="8.8" fill="#d4d4d4">300</text>
<line x1="398.5" y1="220.3" x2="398.5" y2="224.5" stroke="#cdcdcd" stroke-width="1"/>
<line x1="402.7" y1="222" x2="402.7" y2="224.5" stroke="#b4b4b4" stroke-width="1"/>
<line x1="407.5" y1="220.3" x2="407.5" y2="224.5" stroke="#cdcdcd" stroke-width="1"/>
<line x1="411.7" y1="222" x2="411.7" y2="224.5" stroke="#b4b4b4" stroke-width="1"/>
<line x1="416.5" y1="220.3" x2="416.5" y2="224.5" stroke="#cdcdcd" stroke-width="1"/>
<line x1="420.7" y1="222" x2="420.7" y2="224.5" stroke="#b4b4b4" stroke-width="1"/>
<line x1="425.5" y1="220.3" x2="425.5" y2="224.5" stroke="#cdcdcd" stroke-width="1"/>
<line x1="429.7" y1="222" x2="429.7" y2="224.5" stroke="#b4b4b4" stroke-width="1"/>
<line x1="434.5" y1="220.3" x2="434.5" y2="224.5" stroke="#cdcdcd" stroke-width="1"/>
<line x1="439.5" y1="210" x2="439.5" y2="224.5" stroke="#cdcdcd" stroke-width="1"/>
<text x="442.1" y="218.6" font-size="8.8" fill="#d4d4d4">350</text>
<line x1="443.5" y1="220.3" x2="443.5" y2="224.5" stroke="#cdcdcd" stroke-width="1"/>
<line x1="447.7" y1="222" x2="447.7" y2="224.5" stroke="#b4b4b4" stroke-width="1"/>
<line x1="452.5" y1="220.3" x2="452.5" y2="224.5" stroke="#cdcdcd" stroke-width="1"/>
<line x1="456.7" y1="222" x2="456.7" y2="224.5" stroke="#b4b4b4" stroke-width="1"/>
<line x1="461.5" y1="220.3" x2="461.5" y2="224.5" stroke="#cdcdcd" stroke-width="1"/>
<line x1="465.7" y1="222" x2="465.7" y2="224.5" stroke="#b4b4b4" stroke-width="1"/>
<line x1="470.5" y1="220.3" x2="470.5" y2="224.5" stroke="#cdcdcd" stroke-width="1"/>
<line x1="474.7" y1="222" x2="474.7" y2="224.5" stroke="#b4b4b4" stroke-width="1"/>
<line x1="479.5" y1="220.3" x2="479.5" y2="224.5" stroke="#cdcdcd" stroke-width="1"/>
<line x1="484.5" y1="210" x2="484.5" y2="224.5" stroke="#cdcdcd" stroke-width="1"/>
<text x="487.1" y="218.6" font-size="8.8" fill="#d4d4d4">400</text>
<line x1="488.5" y1="220.3" x2="488.5" y2="224.5" stroke="#cdcdcd" stroke-width="1"/>
<line x1="492.7" y1="222" x2="492.7" y2="224.5" stroke="#b4b4b4" stroke-width="1"/>
<line x1="497.5" y1="220.3" x2="497.5" y2="224.5" stroke="#cdcdcd" stroke-width="1"/>
<line x1="501.7" y1="222" x2="501.7" y2="224.5" stroke="#b4b4b4" stroke-width="1"/>
<line x1="506.5" y1="220.3" x2="506.5" y2="224.5" stroke="#cdcdcd" stroke-width="1"/>
<line x1="510.7" y1="222" x2="510.7" y2="224.5" stroke="#b4b4b4" stroke-width="1"/>
<line x1="515.5" y1="220.3" x2="515.5" y2="224.5" stroke="#cdcdcd" stroke-width="1"/>
<line x1="520.5" y1="220.3" x2="520.5" y2="224.5" stroke="#cdcdcd" stroke-width="1"/>
<line x1="524.7" y1="222" x2="524.7" y2="224.5" stroke="#b4b4b4" stroke-width="1"/>
<line x1="529.5" y1="210" x2="529.5" y2="224.5" stroke="#cdcdcd" stroke-width="1"/>
<text x="532.1" y="218.6" font-size="8.8" fill="#d4d4d4">450</text>
<line x1="533.7" y1="222" x2="533.7" y2="224.5" stroke="#b4b4b4" stroke-width="1"/>
<line x1="538.5" y1="220.3" x2="538.5" y2="224.5" stroke="#cdcdcd" stroke-width="1"/>
<line x1="542.7" y1="222" x2="542.7" y2="224.5" stroke="#b4b4b4" stroke-width="1"/>
<line x1="547.5" y1="220.3" x2="547.5" y2="224.5" stroke="#cdcdcd" stroke-width="1"/>
<line x1="551.7" y1="222" x2="551.7" y2="224.5" stroke="#b4b4b4" stroke-width="1"/>
<line x1="556.5" y1="220.3" x2="556.5" y2="224.5" stroke="#cdcdcd" stroke-width="1"/>
<line x1="560.7" y1="222" x2="560.7" y2="224.5" stroke="#b4b4b4" stroke-width="1"/>
<line x1="565.5" y1="220.3" x2="565.5" y2="224.5" stroke="#cdcdcd" stroke-width="1"/>
<line x1="569.7" y1="222" x2="569.7" y2="224.5" stroke="#b4b4b4" stroke-width="1"/>
<line x1="574.5" y1="210" x2="574.5" y2="224.5" stroke="#cdcdcd" stroke-width="1"/>
<text x="577.1" y="218.6" font-size="8.8" fill="#d4d4d4">500</text>
<line x1="578.7" y1="222" x2="578.7" y2="224.5" stroke="#b4b4b4" stroke-width="1"/>
<line x1="583.5" y1="220.3" x2="583.5" y2="224.5" stroke="#cdcdcd" stroke-width="1"/>
<line x1="587.7" y1="222" x2="587.7" y2="224.5" stroke="#b4b4b4" stroke-width="1"/>
<line x1="592.5" y1="220.3" x2="592.5" y2="224.5" stroke="#cdcdcd" stroke-width="1"/>
<line x1="596.7" y1="222" x2="596.7" y2="224.5" stroke="#b4b4b4" stroke-width="1"/>
<line x1="601.5" y1="220.3" x2="601.5" y2="224.5" stroke="#cdcdcd" stroke-width="1"/>
<line x1="605.7" y1="222" x2="605.7" y2="224.5" stroke="#b4b4b4" stroke-width="1"/>
<line x1="610.5" y1="220.3" x2="610.5" y2="224.5" stroke="#cdcdcd" stroke-width="1"/>
<line x1="614.7" y1="222" x2="614.7" y2="224.5" stroke="#b4b4b4" stroke-width="1"/>
<line x1="619.5" y1="210" x2="619.5" y2="224.5" stroke="#cdcdcd" stroke-width="1"/>
<text x="622.1" y="218.6" font-size="8.8" fill="#d4d4d4">550</text>
<line x1="623.7" y1="222" x2="623.7" y2="224.5" stroke="#b4b4b4" stroke-width="1"/>
<line x1="628.5" y1="220.3" x2="628.5" y2="224.5" stroke="#cdcdcd" stroke-width="1"/>
<line x1="632.7" y1="222" x2="632.7" y2="224.5" stroke="#b4b4b4" stroke-width="1"/>
<line x1="637.5" y1="220.3" x2="637.5" y2="224.5" stroke="#cdcdcd" stroke-width="1"/>
<line x1="641.7" y1="222" x2="641.7" y2="224.5" stroke="#b4b4b4" stroke-width="1"/>
<line x1="646.5" y1="220.3" x2="646.5" y2="224.5" stroke="#cdcdcd" stroke-width="1"/>
<line x1="650.7" y1="222" x2="650.7" y2="224.5" stroke="#b4b4b4" stroke-width="1"/>
<line x1="655.5" y1="220.3" x2="655.5" y2="224.5" stroke="#cdcdcd" stroke-width="1"/>
<line x1="659.7" y1="222" x2="659.7" y2="224.5" stroke="#b4b4b4" stroke-width="1"/>
<line x1="664.5" y1="210" x2="664.5" y2="224.5" stroke="#cdcdcd" stroke-width="1"/>
<text x="667.1" y="218.6" font-size="8.8" fill="#d4d4d4">600</text>
<line x1="668.7" y1="222" x2="668.7" y2="224.5" stroke="#b4b4b4" stroke-width="1"/>
<line x1="673.5" y1="220.3" x2="673.5" y2="224.5" stroke="#cdcdcd" stroke-width="1"/>
<line x1="677.7" y1="222" x2="677.7" y2="224.5" stroke="#b4b4b4" stroke-width="1"/>
<line x1="682.5" y1="220.3" x2="682.5" y2="224.5" stroke="#cdcdcd" stroke-width="1"/>
<line x1="686.7" y1="222" x2="686.7" y2="224.5" stroke="#b4b4b4" stroke-width="1"/>
<line x1="691.5" y1="220.3" x2="691.5" y2="224.5" stroke="#cdcdcd" stroke-width="1"/>
<line x1="695.7" y1="222" x2="695.7" y2="224.5" stroke="#b4b4b4" stroke-width="1"/>
<line x1="15.8" y1="225.7" x2="18.3" y2="225.7" stroke="#b4b4b4" stroke-width="1"/>
<line x1="14.2" y1="230.5" x2="18.3" y2="230.5" stroke="#cdcdcd" stroke-width="1"/>
<line x1="15.8" y1="234.7" x2="18.3" y2="234.7" stroke="#b4b4b4" stroke-width="1"/>
<line x1="14.2" y1="239.5" x2="18.3" y2="239.5" stroke="#cdcdcd" stroke-width="1"/>
<line x1="15.8" y1="243.7" x2="18.3" y2="243.7" stroke="#b4b4b4" stroke-width="1"/>
<line x1="4.6" y1="248.5" x2="18.3" y2="248.5" stroke="#cdcdcd" stroke-width="1"/>
<text transform="translate(10.7,250.7) rotate(-90)" text-anchor="end" font-size="9.2" fill="#d4d4d4">0</text>
<line x1="15.8" y1="252.7" x2="18.3" y2="252.7" stroke="#b4b4b4" stroke-width="1"/>
<line x1="14.2" y1="257.5" x2="18.3" y2="257.5" stroke="#cdcdcd" stroke-width="1"/>
<line x1="15.8" y1="261.7" x2="18.3" y2="261.7" stroke="#b4b4b4" stroke-width="1"/>
<line x1="14.2" y1="266.5" x2="18.3" y2="266.5" stroke="#cdcdcd" stroke-width="1"/>
<line x1="15.8" y1="270.7" x2="18.3" y2="270.7" stroke="#b4b4b4" stroke-width="1"/>
<line x1="14.2" y1="275.5" x2="18.3" y2="275.5" stroke="#cdcdcd" stroke-width="1"/>
<line x1="15.8" y1="279.7" x2="18.3" y2="279.7" stroke="#b4b4b4" stroke-width="1"/>
<line x1="14.2" y1="284.5" x2="18.3" y2="284.5" stroke="#cdcdcd" stroke-width="1"/>
<line x1="15.8" y1="288.7" x2="18.3" y2="288.7" stroke="#b4b4b4" stroke-width="1"/>
<line x1="4.6" y1="293.5" x2="18.3" y2="293.5" stroke="#cdcdcd" stroke-width="1"/>
<text transform="translate(10.7,295.7) rotate(-90)" text-anchor="end" font-size="9.2" fill="#d4d4d4">50</text>
<line x1="15.8" y1="297.7" x2="18.3" y2="297.7" stroke="#b4b4b4" stroke-width="1"/>
<line x1="14.2" y1="302.5" x2="18.3" y2="302.5" stroke="#cdcdcd" stroke-width="1"/>
<line x1="15.8" y1="306.7" x2="18.3" y2="306.7" stroke="#b4b4b4" stroke-width="1"/>
<line x1="14.2" y1="311.5" x2="18.3" y2="311.5" stroke="#cdcdcd" stroke-width="1"/>
<line x1="15.8" y1="315.7" x2="18.3" y2="315.7" stroke="#b4b4b4" stroke-width="1"/>
<line x1="14.2" y1="320.5" x2="18.3" y2="320.5" stroke="#cdcdcd" stroke-width="1"/>
<line x1="15.8" y1="324.7" x2="18.3" y2="324.7" stroke="#b4b4b4" stroke-width="1"/>
<line x1="14.2" y1="329.5" x2="18.3" y2="329.5" stroke="#cdcdcd" stroke-width="1"/>
<line x1="15.8" y1="333.7" x2="18.3" y2="333.7" stroke="#b4b4b4" stroke-width="1"/>
<line x1="4.6" y1="338.5" x2="18.3" y2="338.5" stroke="#cdcdcd" stroke-width="1"/>
<text transform="translate(10.7,340.7) rotate(-90)" text-anchor="end" font-size="9.2" fill="#d4d4d4">100</text>
<line x1="15.8" y1="342.7" x2="18.3" y2="342.7" stroke="#b4b4b4" stroke-width="1"/>
<line x1="14.2" y1="347.5" x2="18.3" y2="347.5" stroke="#cdcdcd" stroke-width="1"/>
<line x1="15.8" y1="351.7" x2="18.3" y2="351.7" stroke="#b4b4b4" stroke-width="1"/>
<line x1="14.2" y1="356.5" x2="18.3" y2="356.5" stroke="#cdcdcd" stroke-width="1"/>
<line x1="15.8" y1="360.7" x2="18.3" y2="360.7" stroke="#b4b4b4" stroke-width="1"/>
<line x1="14.2" y1="365.5" x2="18.3" y2="365.5" stroke="#cdcdcd" stroke-width="1"/>
<line x1="15.8" y1="369.7" x2="18.3" y2="369.7" stroke="#b4b4b4" stroke-width="1"/>
<line x1="14.2" y1="374.5" x2="18.3" y2="374.5" stroke="#cdcdcd" stroke-width="1"/>
<line x1="15.8" y1="378.7" x2="18.3" y2="378.7" stroke="#b4b4b4" stroke-width="1"/>
<line x1="4.6" y1="383.5" x2="18.3" y2="383.5" stroke="#cdcdcd" stroke-width="1"/>
<text transform="translate(10.7,385.7) rotate(-90)" text-anchor="end" font-size="9.2" fill="#d4d4d4">150</text>
<line x1="14.2" y1="388.5" x2="18.3" y2="388.5" stroke="#cdcdcd" stroke-width="1"/>
<line x1="15.8" y1="392.7" x2="18.3" y2="392.7" stroke="#b4b4b4" stroke-width="1"/>
<line x1="14.2" y1="397.5" x2="18.3" y2="397.5" stroke="#cdcdcd" stroke-width="1"/>
<line x1="15.8" y1="401.7" x2="18.3" y2="401.7" stroke="#b4b4b4" stroke-width="1"/>
<line x1="14.2" y1="406.5" x2="18.3" y2="406.5" stroke="#cdcdcd" stroke-width="1"/>
<line x1="15.8" y1="410.7" x2="18.3" y2="410.7" stroke="#b4b4b4" stroke-width="1"/>
<line x1="14.2" y1="415.5" x2="18.3" y2="415.5" stroke="#cdcdcd" stroke-width="1"/>
<line x1="15.8" y1="419.7" x2="18.3" y2="419.7" stroke="#b4b4b4" stroke-width="1"/>
<line x1="14.2" y1="424.5" x2="18.3" y2="424.5" stroke="#cdcdcd" stroke-width="1"/>
<line x1="4.6" y1="428.5" x2="18.3" y2="428.5" stroke="#cdcdcd" stroke-width="1"/>
<text transform="translate(10.7,430.7) rotate(-90)" text-anchor="end" font-size="9.2" fill="#d4d4d4">200</text>
<line x1="14.2" y1="433.5" x2="18.3" y2="433.5" stroke="#cdcdcd" stroke-width="1"/>
<line x1="15.8" y1="437.7" x2="18.3" y2="437.7" stroke="#b4b4b4" stroke-width="1"/>
<line x1="14.2" y1="442.5" x2="18.3" y2="442.5" stroke="#cdcdcd" stroke-width="1"/>
<line x1="15.8" y1="446.7" x2="18.3" y2="446.7" stroke="#b4b4b4" stroke-width="1"/>
<line x1="14.2" y1="451.5" x2="18.3" y2="451.5" stroke="#cdcdcd" stroke-width="1"/>
<line x1="15.8" y1="455.7" x2="18.3" y2="455.7" stroke="#b4b4b4" stroke-width="1"/>
<line x1="14.2" y1="460.5" x2="18.3" y2="460.5" stroke="#cdcdcd" stroke-width="1"/>
<line x1="15.8" y1="464.7" x2="18.3" y2="464.7" stroke="#b4b4b4" stroke-width="1"/>
<line x1="14.2" y1="469.5" x2="18.3" y2="469.5" stroke="#cdcdcd" stroke-width="1"/>
<line x1="4.6" y1="473.5" x2="18.3" y2="473.5" stroke="#cdcdcd" stroke-width="1"/>
<text transform="translate(10.7,475.7) rotate(-90)" text-anchor="end" font-size="9.2" fill="#d4d4d4">250</text>
<line x1="14.2" y1="478.5" x2="18.3" y2="478.5" stroke="#cdcdcd" stroke-width="1"/>
<line x1="15.8" y1="482.7" x2="18.3" y2="482.7" stroke="#b4b4b4" stroke-width="1"/>
<line x1="14.2" y1="487.5" x2="18.3" y2="487.5" stroke="#cdcdcd" stroke-width="1"/>
<line x1="15.8" y1="491.7" x2="18.3" y2="491.7" stroke="#b4b4b4" stroke-width="1"/>
<line x1="14.2" y1="496.5" x2="18.3" y2="496.5" stroke="#cdcdcd" stroke-width="1"/>
<line x1="15.8" y1="500.7" x2="18.3" y2="500.7" stroke="#b4b4b4" stroke-width="1"/>
<line x1="14.2" y1="505.5" x2="18.3" y2="505.5" stroke="#cdcdcd" stroke-width="1"/>
<line x1="15.8" y1="509.7" x2="18.3" y2="509.7" stroke="#b4b4b4" stroke-width="1"/>
<line x1="14.2" y1="514.5" x2="18.3" y2="514.5" stroke="#cdcdcd" stroke-width="1"/>
<line x1="4.6" y1="518.5" x2="18.3" y2="518.5" stroke="#cdcdcd" stroke-width="1"/>
<text transform="translate(10.7,520.7) rotate(-90)" text-anchor="end" font-size="9.2" fill="#d4d4d4">300</text>
<line x1="14.2" y1="523.5" x2="18.3" y2="523.5" stroke="#cdcdcd" stroke-width="1"/>
<line x1="15.8" y1="527.7" x2="18.3" y2="527.7" stroke="#b4b4b4" stroke-width="1"/>
<line x1="14.2" y1="532.5" x2="18.3" y2="532.5" stroke="#cdcdcd" stroke-width="1"/>
<line x1="15.8" y1="536.7" x2="18.3" y2="536.7" stroke="#b4b4b4" stroke-width="1"/>
<line x1="14.2" y1="541.5" x2="18.3" y2="541.5" stroke="#cdcdcd" stroke-width="1"/>
<line x1="15.8" y1="545.7" x2="18.3" y2="545.7" stroke="#b4b4b4" stroke-width="1"/>
<line x1="14.2" y1="550.5" x2="18.3" y2="550.5" stroke="#cdcdcd" stroke-width="1"/>
<line x1="15.8" y1="554.7" x2="18.3" y2="554.7" stroke="#b4b4b4" stroke-width="1"/>
<line x1="14.2" y1="559.5" x2="18.3" y2="559.5" stroke="#cdcdcd" stroke-width="1"/>
<line x1="4.6" y1="564.5" x2="18.3" y2="564.5" stroke="#cdcdcd" stroke-width="1"/>
<text transform="translate(10.7,566.7) rotate(-90)" text-anchor="end" font-size="9.2" fill="#d4d4d4">350</text>
<line x1="14.2" y1="568.5" x2="18.3" y2="568.5" stroke="#cdcdcd" stroke-width="1"/>
<line x1="15.8" y1="572.7" x2="18.3" y2="572.7" stroke="#b4b4b4" stroke-width="1"/>
<line x1="14.2" y1="577.5" x2="18.3" y2="577.5" stroke="#cdcdcd" stroke-width="1"/>
<line x1="15.8" y1="581.7" x2="18.3" y2="581.7" stroke="#b4b4b4" stroke-width="1"/>
<line x1="14.2" y1="586.5" x2="18.3" y2="586.5" stroke="#cdcdcd" stroke-width="1"/>
<line x1="15.8" y1="590.7" x2="18.3" y2="590.7" stroke="#b4b4b4" stroke-width="1"/>
<line x1="14.2" y1="595.5" x2="18.3" y2="595.5" stroke="#cdcdcd" stroke-width="1"/>
<line x1="15.8" y1="599.7" x2="18.3" y2="599.7" stroke="#b4b4b4" stroke-width="1"/>
<line x1="14.2" y1="604.5" x2="18.3" y2="604.5" stroke="#cdcdcd" stroke-width="1"/>
<line x1="4.6" y1="609.5" x2="18.3" y2="609.5" stroke="#cdcdcd" stroke-width="1"/>
<text transform="translate(10.7,611.7) rotate(-90)" text-anchor="end" font-size="9.2" fill="#d4d4d4">400</text>
<line x1="14.2" y1="613.5" x2="18.3" y2="613.5" stroke="#cdcdcd" stroke-width="1"/>
<line x1="15.8" y1="617.7" x2="18.3" y2="617.7" stroke="#b4b4b4" stroke-width="1"/>
<line x1="14.2" y1="622.5" x2="18.3" y2="622.5" stroke="#cdcdcd" stroke-width="1"/>
<line x1="15.8" y1="626.7" x2="18.3" y2="626.7" stroke="#b4b4b4" stroke-width="1"/>
<line x1="14.2" y1="631.5" x2="18.3" y2="631.5" stroke="#cdcdcd" stroke-width="1"/>
<line x1="15.8" y1="635.7" x2="18.3" y2="635.7" stroke="#b4b4b4" stroke-width="1"/>
<line x1="14.2" y1="640.5" x2="18.3" y2="640.5" stroke="#cdcdcd" stroke-width="1"/>
<line x1="15.8" y1="644.7" x2="18.3" y2="644.7" stroke="#b4b4b4" stroke-width="1"/>
<line x1="14.2" y1="649.5" x2="18.3" y2="649.5" stroke="#cdcdcd" stroke-width="1"/>
<line x1="4.6" y1="654.5" x2="18.3" y2="654.5" stroke="#cdcdcd" stroke-width="1"/>
<text transform="translate(10.7,656.7) rotate(-90)" text-anchor="end" font-size="9.2" fill="#d4d4d4">450</text>
<line x1="14.2" y1="658.5" x2="18.3" y2="658.5" stroke="#cdcdcd" stroke-width="1"/>
<line x1="15.8" y1="662.7" x2="18.3" y2="662.7" stroke="#b4b4b4" stroke-width="1"/>
<line x1="14.2" y1="667.5" x2="18.3" y2="667.5" stroke="#cdcdcd" stroke-width="1"/>
<line x1="14.2" y1="672.5" x2="18.3" y2="672.5" stroke="#cdcdcd" stroke-width="1"/>
<line x1="15.8" y1="676.7" x2="18.3" y2="676.7" stroke="#b4b4b4" stroke-width="1"/>
<line x1="14.2" y1="681.5" x2="18.3" y2="681.5" stroke="#cdcdcd" stroke-width="1"/>
<line x1="15.8" y1="685.7" x2="18.3" y2="685.7" stroke="#b4b4b4" stroke-width="1"/>
<line x1="14.2" y1="690.5" x2="18.3" y2="690.5" stroke="#cdcdcd" stroke-width="1"/>
<line x1="15.8" y1="694.7" x2="18.3" y2="694.7" stroke="#b4b4b4" stroke-width="1"/>
</svg>
<div class="t b" style="left:10px;top:5.5px;color:#f2f2f2;">Timeline</div>
<div class="t b" style="left:62px;top:5.5px;color:#c4c4c4;">Output</div>
<div class="t " style="left:39.2px;top:44.0px;color:#f4f4f4;-webkit-text-stroke:0.25px #f4f4f4;">btnExpand</div>
<div class="t " style="left:39.2px;top:57.6px;color:#f4f4f4;-webkit-text-stroke:0.25px #f4f4f4;">Layer 5</div>
<div class="t " style="left:39.2px;top:71.2px;color:#f4f4f4;-webkit-text-stroke:0.25px #f4f4f4;">btnCollapse</div>
<div class="t " style="left:39.2px;top:84.8px;color:#f4f4f4;-webkit-text-stroke:0.25px #f4f4f4;">exp_banner</div>
<div class="t " style="left:39.2px;top:98.4px;color:#f4f4f4;-webkit-text-stroke:0.25px #f4f4f4;">main_banner</div>
<div class="t b" style="left:25px;top:171.2px;color:#b8b8b8;">Untitled-4 (Canvas)*</div>
<div class="t b" style="left:151px;top:171.2px;color:#f0f0f0;">Untitled-6 (Canvas)*</div>
<div class="t " style="left:56.4px;top:193.2px;color:#d8d8d8;">Scene 1</div>
<div class="t " style="left:381.4px;top:147.6px;color:#dba21f;font-size:9.5px;font-weight:bold;font-family:'Liberation Sans',sans-serif;">1</div>
<div class="t " style="left:411px;top:147.5px;color:#8a8a8a;font-size:9px;font-family:'Liberation Sans',sans-serif;">24.00 fps</div>
<div class="t " style="left:454.6px;top:147.6px;color:#dba21f;font-size:9.5px;font-weight:bold;font-family:'Liberation Sans',sans-serif;">0.0</div>
<div class="t " style="left:469.6px;top:148px;color:#d0d0d0;font-size:7.6px;font-family:'Liberation Sans',sans-serif;font-weight:bold;">s</div>
<div class="t " style="left:635px;top:193px;color:#1a1a1a;font-size:9.2px;">100%</div>
</body></html>
